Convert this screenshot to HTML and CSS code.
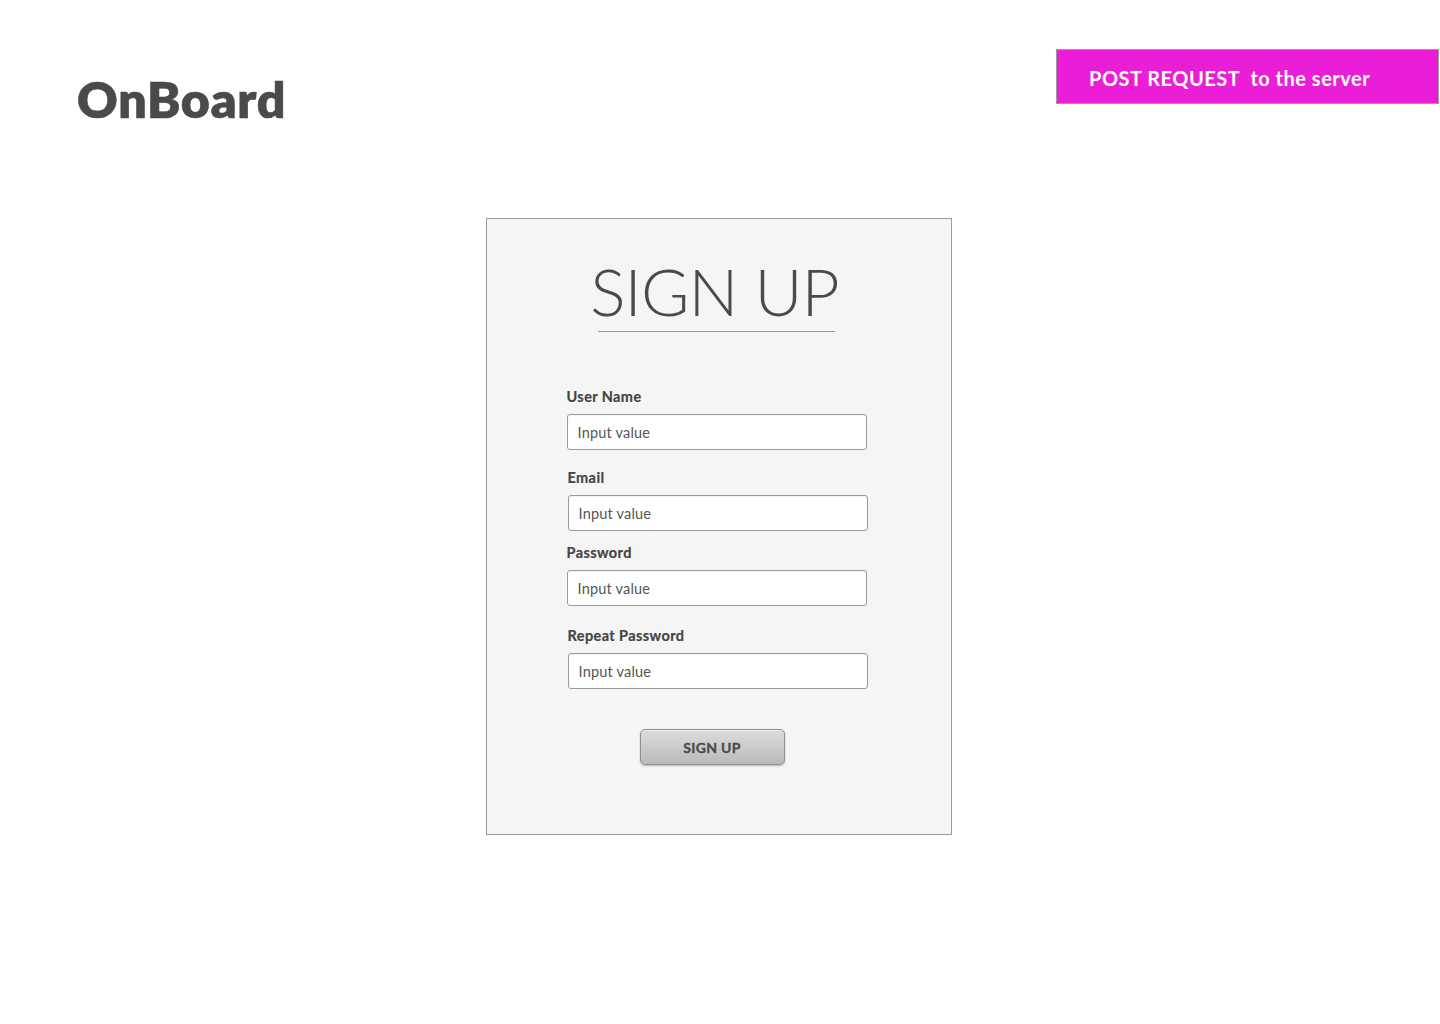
FILE: index.html
```html
<!DOCTYPE html>
<html lang="en">
<head>
<meta charset="utf-8">
<title>OnBoard – Sign Up</title>
<link rel="stylesheet" href="styles.css">
</head>
<body>
  <header class="top">
    <h1 class="brand">OnBoard</h1>
    <div class="note">POST REQUEST&nbsp; to the server</div>
  </header>
  <main class="stage">
    <section class="card">
      <div class="title-wrap">
        <h2 class="card-title">SIGN UP</h2>
        <div class="title-rule"></div>
      </div>
      <form class="form">
        <div class="field field-user">
          <label class="label">User Name</label>
          <input class="input" type="text" placeholder="Input value">
        </div>
        <div class="field field-email shift">
          <label class="label">Email</label>
          <input class="input" type="text" placeholder="Input value">
        </div>
        <div class="field field-pass">
          <label class="label">Password</label>
          <input class="input" type="password" placeholder="Input value">
        </div>
        <div class="field field-repeat shift">
          <label class="label">Repeat Password</label>
          <input class="input" type="password" placeholder="Input value">
        </div>
        <button class="btn" type="button">SIGN UP</button>
      </form>
    </section>
  </main>
</body>
</html>
```
FILE: styles.css
```css
* { box-sizing: border-box; }

html, body {
  margin: 0;
  padding: 0;
  background: #ffffff;
  font-family: Lato, "Noto Sans", "Liberation Sans", sans-serif;
  color: #4a4a4a;
}

.top {
  display: flex;
  justify-content: space-between;
  align-items: flex-start;
  height: 104px;
  padding: 49px 1px 0 77px;
}

.brand {
  margin: 20px 0 0 0;
  font-size: 50px;
  font-weight: 800;
  line-height: 1.2;
  color: #4a4a4a;
  letter-spacing: 0.8px;
  -webkit-text-stroke: 0.6px #4a4a4a;
}

.note {
  width: 383px;
  height: 55px;
  background: #eb1ed8;
  border: 1px solid #9a9a9a;
  color: #ffffff;
  font-size: 20px;
  font-weight: 700;
  line-height: 1.2;
  padding: 16px 0 0 32px;
  letter-spacing: 0.5px;
  white-space: nowrap;
}

.stage {
  display: flex;
  justify-content: center;
  padding: 114px 3px 0 0;
}

.card {
  width: 466px;
  height: 617px;
  background: #f5f5f5;
  border: 1px solid #9a9a9a;
  padding: 32px 0 0 80px;
}

.title-wrap {
  width: 302px;
  display: flex;
  flex-direction: column;
  align-items: center;
}

.card-title {
  margin: 0 0 0 -6px;
  white-space: nowrap;
  font-size: 66px;
  font-weight: 300;
  line-height: 1.2;
  color: #4a4a4a;
  letter-spacing: -0.9px;
}

.title-rule {
  width: 237px;
  height: 1px;
  background: #9a9a9a;
  margin: 1px 0 0 -3px;
}

.form {
  display: flex;
  flex-direction: column;
  width: 302px;
  margin-top: 55px;
}

.field {
  display: flex;
  flex-direction: column;
  gap: 7px;
}

.field.shift { margin-left: 1px; }

.field-email { margin-top: 18px; }
.field-pass { margin-top: 12px; }
.field-repeat { margin-top: 20px; }

.label {
  font-size: 14.5px;
  font-weight: 700;
  line-height: 20px;
  color: #444444;
  letter-spacing: 0.4px;
  -webkit-text-stroke: 0.2px #444444;
}

.input {
  width: 300px;
  height: 36px;
  background: #ffffff;
  border: 1px solid #9a9a9a;
  border-radius: 3px;
  padding: 0 10px;
  font-family: Lato, "Noto Sans", "Liberation Sans", sans-serif;
  font-size: 14.5px;
  letter-spacing: 0.2px;
  color: #555555;
  outline: none;
  box-shadow: inset 0 1px 1px rgba(0,0,0,0.05);
}

.input::placeholder {
  color: #555555;
  opacity: 1;
}

.btn {
  align-self: flex-start;
  margin: 40px 0 0 73px;
  width: 145px;
  height: 36px;
  border: 1px solid #8f8f8f;
  border-radius: 5px;
  background: linear-gradient(to bottom, #dcdcdc 0%, #c9c9c9 55%, #b9b9b9 100%);
  box-shadow: 0 1px 2px rgba(0,0,0,0.25), inset 0 1px 0 rgba(255,255,255,0.6);
  font-family: Lato, "Noto Sans", "Liberation Sans", sans-serif;
  font-size: 14px;
  font-weight: 700;
  color: #4a4a4a;
  letter-spacing: 0.3px;
  -webkit-text-stroke: 0.3px #4a4a4a;
  padding: 0;
  cursor: pointer;
}
```
